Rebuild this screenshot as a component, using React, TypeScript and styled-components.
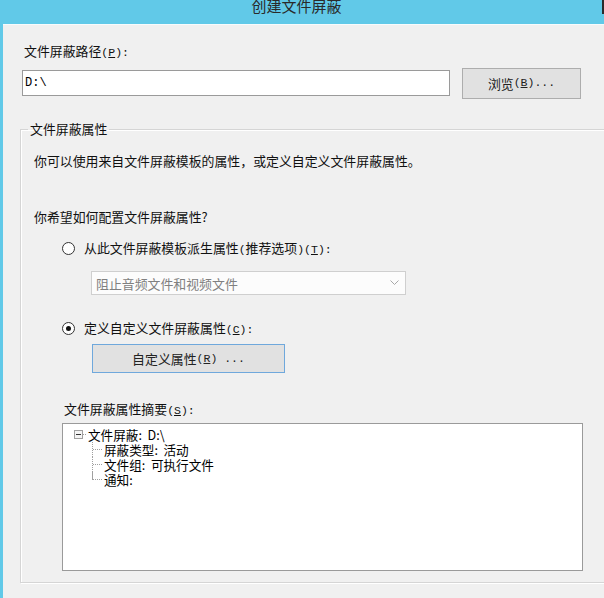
import React from 'react';
import styled, { createGlobalStyle } from 'styled-components';

const GlobalStyle = createGlobalStyle`
  html, body {
    margin: 0;
    padding: 0;
    background: #f0f0f0;
  }
  body {
    font-family: "Noto Sans CJK SC", "Noto Sans", sans-serif;
    font-size: 12.9px;
    color: #111;
  }
`;

const Window = styled.div`
  width: 604px;
  height: 598px;
  box-sizing: border-box;
  overflow: hidden;
  display: flex;
  flex-direction: column;
  border-left: 3px solid #61c9e8;
  background: #f0f0f0;
`;

const TitleBar = styled.div`
  height: 24px;
  flex-shrink: 0;
  display: flex;
  align-items: flex-start;
  background: #61c9e8;
  overflow: hidden;
`;

const TitleText = styled.div`
  flex: 1;
  margin-top: -2px;
  padding-right: 12px;
  text-align: center;
  font-size: 15px;
  line-height: 16px;
  color: #2a2a2a;
`;

const EdgeMark = styled.div`
  width: 2px;
  height: 14px;
  background: #2b2b2b;
`;

const Body = styled.div`
  flex: 1;
  display: flex;
  flex-direction: column;
  align-items: flex-start;
  padding: 17px 0 0 19px;
  border-top: 1px solid #f7fbfc;
`;

const Text = styled.div<{ $top?: number; $left?: number }>`
  height: 18px;
  line-height: 18px;
  white-space: nowrap;
  margin-top: ${p => p.$top ?? 0}px;
  margin-left: ${p => p.$left ?? 0}px;
`;

// ASCII parts (accelerators, paths) render in a fixed-width face as in the dialog
const Mono = styled.span`
  font-family: "Liberation Mono", monospace;
  font-size: 11.5px;
  line-height: 10px;
  color: inherit;
`;

const PathRow = styled.div`
  display: flex;
  align-items: center;
  gap: 12px;
  height: 32px;
  margin-top: 7px;
`;

const PathInput = styled.div`
  width: 428px;
  height: 26px;
  box-sizing: border-box;
  display: flex;
  align-items: center;
  padding: 0 2px;
  background: #fff;
  border: 1px solid #9a9a9a;
  font-family: "Liberation Mono", monospace;
  font-size: 12px;
  color: #000;
`;

const Button = styled.div<{ $w: number; $h: number; $focus?: boolean }>`
  width: ${p => p.$w}px;
  height: ${p => p.$h}px;
  box-sizing: border-box;
  display: flex;
  align-items: center;
  justify-content: center;
  background: #e1e1e1;
  border: 1px solid ${p => (p.$focus ? '#6fa8dc' : '#adadad')};
  color: #222;
  white-space: nowrap;
`;

const Group = styled.fieldset`
  margin: 21px -40px 0 -2px;
  padding: 0 0 11px 13px;
  align-self: stretch;
  border: 1px solid #d5d5d5;
  box-shadow: inset 1px 1px 0 #fff, 1px 1px 0 #fff;
  min-width: 0;
`;

const Legend = styled.legend`
  margin-left: -6px;
  padding: 0 2px;
  line-height: 18px;
  color: #111;
`;

const GroupBody = styled.div`
  display: flex;
  flex-direction: column;
  align-items: flex-start;
`;

const RadioRow = styled.div<{ $top: number }>`
  display: flex;
  align-items: center;
  gap: 9px;
  height: 18px;
  line-height: 18px;
  margin-top: ${p => p.$top}px;
  margin-left: 28px;
  white-space: nowrap;
`;

const RadioCircle = styled.span<{ $checked?: boolean }>`
  width: 13px;
  height: 13px;
  box-sizing: border-box;
  border-radius: 50%;
  border: 1px solid #333;
  background: #fff;
  display: flex;
  align-items: center;
  justify-content: center;
  &::after {
    content: '';
    width: 5px;
    height: 5px;
    border-radius: 50%;
    background: ${p => (p.$checked ? '#111' : 'transparent')};
  }
`;

const Combo = styled.div`
  width: 315px;
  height: 24px;
  box-sizing: border-box;
  margin-top: 14px;
  margin-left: 57px;
  display: flex;
  align-items: center;
  justify-content: space-between;
  padding: 0 6px 0 4px;
  background: #fcfcfc;
  border: 1px solid #cfcfcf;
  color: #808080;
`;

const ButtonSlot = styled.div`
  margin-top: 7px;
  margin-left: 58px;
`;

const TreeBox = styled.div`
  width: 521px;
  height: 148px;
  box-sizing: border-box;
  margin-top: 5px;
  margin-left: 28px;
  padding: 3px 0 0 11px;
  background: #fff;
  border: 1px solid #9a9a9a;
  font-size: 12.6px;
  color: #000;
`;

const TreeRoot = styled.div`
  display: flex;
  align-items: center;
  height: 15px;
  white-space: nowrap;
`;

const TreeText = styled.span`
  display: block;
  height: 15px;
  line-height: 15px;
  white-space: pre;
`;

const ExpandBox = styled.span`
  width: 9px;
  height: 9px;
  box-sizing: border-box;
  border: 1px solid #a0a0a0;
  background: #f4f4f4;
  display: flex;
  align-items: center;
  justify-content: center;
  &::after {
    content: '';
    width: 5px;
    height: 1px;
    background: #333;
  }
`;

const DotsH = styled.span<{ $w: number }>`
  width: ${p => p.$w}px;
  height: 0;
  border-top: 1px dotted #a0a0a0;
  margin-right: 2px;
`;

const TreeChildren = styled.div`
  margin-left: 18px;
  display: flex;
  flex-direction: column;
`;

const TreeChild = styled.div<{ $last?: boolean }>`
  display: flex;
  align-items: center;
  height: 15px;
  white-space: nowrap;
  border-left: 1px dotted #a0a0a0;
  ${p => (p.$last ? 'border-image: linear-gradient(#a0a0a0 50%, transparent 50%) 1;' : '')}
`;

const Chevron = () => (
  <svg width="9" height="6" viewBox="0 0 9 6">
    <polyline points="0.5,0.5 4.5,4.5 8.5,0.5" fill="none" stroke="#a8a8a8" strokeWidth="1" />
  </svg>
);

const summary = ['屏蔽类型:  活动', '文件组:  可执行文件', '通知:'];

const App: React.FC = () => {
  return (
    <>
      <GlobalStyle />
      <Window>
        <TitleBar>
          <TitleText>创建文件屏蔽</TitleText>
          <EdgeMark />
        </TitleBar>
        <Body>
          <Text $left={2}>
            文件屏蔽路径<Mono>(<u>P</u>):</Mono>
          </Text>
          <PathRow>
            <PathInput>D:\</PathInput>
            <Button $w={119} $h={31}>
              浏览<Mono>(<u>B</u>)...</Mono>
            </Button>
          </PathRow>

          <Group>
            <Legend>文件屏蔽属性</Legend>
            <GroupBody>
              <Text $top={14}>你可以使用来自文件屏蔽模板的属性，或定义自定义文件屏蔽属性。</Text>
              <Text $top={38}>你希望如何配置文件屏蔽属性?</Text>

              <RadioRow $top={13}>
                <RadioCircle />
                <span>
                  从此文件屏蔽模板派生属性<Mono>(</Mono>推荐选项<Mono>)(<u>T</u>):</Mono>
                </span>
              </RadioRow>
              <Combo>
                <span>阻止音频文件和视频文件</span>
                <Chevron />
              </Combo>

              <RadioRow $top={24}>
                <RadioCircle $checked />
                <span>
                  定义自定义文件屏蔽属性<Mono>(<u>C</u>):</Mono>
                </span>
              </RadioRow>
              <ButtonSlot>
                <Button $w={193} $h={29} $focus>
                  自定义属性<Mono>(<u>R</u>) ...</Mono>
                </Button>
              </ButtonSlot>

              <Text $top={27} $left={30}>
                文件屏蔽属性摘要<Mono>(<u>S</u>):</Mono>
              </Text>
              <TreeBox>
                <TreeRoot>
                  <ExpandBox />
                  <DotsH $w={3} />
                  <TreeText>文件屏蔽:  D:\</TreeText>
                </TreeRoot>
                <TreeChildren>
                  {summary.map((item, i) => (
                    <TreeChild key={item} $last={i === summary.length - 1}>
                      <DotsH $w={9} />
                      <TreeText>{item}</TreeText>
                    </TreeChild>
                  ))}
                </TreeChildren>
              </TreeBox>
            </GroupBody>
          </Group>
        </Body>
      </Window>
    </>
  );
};

export default App;
